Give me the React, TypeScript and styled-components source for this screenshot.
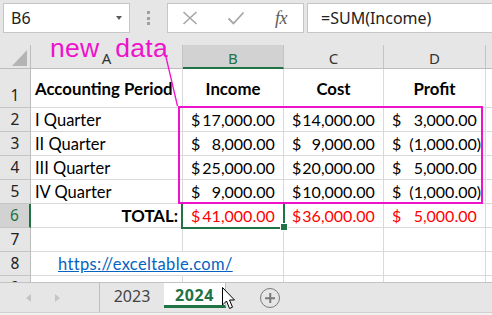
import React from "react";
import styled, { createGlobalStyle } from "styled-components";

const UI = `"Noto Sans", "Open Sans", sans-serif`;
const CELL = `Lato, "Noto Sans", sans-serif`;
const GREEN = "#217346";
const MAGENTA = "#ee12cc";

const GlobalStyle = createGlobalStyle`
  html, body { margin: 0; padding: 0; background: #ffffff; overflow: hidden; }
  * { box-sizing: border-box; }
`;

const Frame = styled.div`
  position: relative;
  width: 492px;
  height: 315px;
  background: #e6e6e6;
  display: flex;
  flex-direction: column;
  overflow: hidden;
`;

const FormulaBar = styled.div`
  flex: 0 0 45px;
  display: flex;
  align-items: flex-start;
  padding: 3px 0 0 3px;
`;

const NameBox = styled.div`
  flex: 0 0 127px;
  height: 30px;
  background: #fff;
  border: 1px solid #c6c6c6;
  display: flex;
  align-items: center;
  justify-content: space-between;
  padding: 0 7px 0 7px;
  font: 16px ${UI};
  color: #222;
`;

const Caret = styled.span`
  width: 0;
  height: 0;
  border-left: 3.5px solid transparent;
  border-right: 3.5px solid transparent;
  border-top: 4px solid #5a5a5a;
`;

const Grip = styled.div`
  margin: 8px 0 0 17px;
  display: flex;
  flex-direction: column;
  gap: 2.5px;
  & > span {
    width: 3px;
    height: 3px;
    background: #a0a0a0;
  }
`;

const ButtonsBox = styled.div`
  flex: 0 0 137px;
  height: 30px;
  margin-left: 17px;
  background: #fff;
  border: 1px solid #c6c6c6;
  position: relative;
  display: flex;
  align-items: center;
  padding-left: 14px;
`;

const Fx = styled.span`
  margin-left: auto;
  margin-right: 16px;
  font: italic 18px "Liberation Serif", "DejaVu Serif", serif;
  color: #5a5a5a;
  letter-spacing: -0.5px;
`;

const FormulaBox = styled.div`
  flex: 0 0 200px;
  height: 30px;
  margin-left: 3px;
  background: #fff;
  border: 1px solid #c6c6c6;
  border-right: none;
  display: flex;
  align-items: center;
  padding-left: 13px;
  font: 16px ${UI};
  color: #222;
`;

const SheetArea = styled.div`
  flex: 0 0 237px;
  background: #fff;
  overflow: hidden;
`;

const Grid = styled.div`
  display: grid;
  grid-template-columns: 31px 152px 101px 100px 102px 1fr;
  grid-template-rows: 24px 39px repeat(8, 24px);
`;

const Corner = styled.div`
  position: relative;
  background: #e6e6e6;
  border-right: 1px solid #bdbdbd;
  border-bottom: 1px solid #bdbdbd;
  &::after {
    content: "";
    position: absolute;
    right: 3px;
    bottom: 2px;
    width: 0;
    height: 0;
    border-left: 15px solid transparent;
    border-bottom: 16px solid #b4b4b4;
  }
`;

const ColHeader = styled.div<{ $selected?: boolean }>`
  background: ${(p) => (p.$selected ? "#d2d2d2" : "#e6e6e6")};
  border-right: 1px solid #c4c4c4;
  border-bottom: ${(p) => (p.$selected ? `2px solid ${GREEN}` : "1px solid #bdbdbd")};
  display: flex;
  align-items: center;
  justify-content: center;
  padding-top: 3px;
  font: 15px ${UI};
  color: ${(p) => (p.$selected ? GREEN : "#333")};
`;

const RowHeader = styled.div<{ $selected?: boolean }>`
  background: ${(p) => (p.$selected ? "#d2d2d2" : "#e6e6e6")};
  border-right: ${(p) => (p.$selected ? `2px solid ${GREEN}` : "1px solid #bdbdbd")};
  border-bottom: 1px solid #c4c4c4;
  display: flex;
  align-items: flex-end;
  justify-content: center;
  padding-bottom: 4px;
  font: 15.5px/16px ${UI};
  color: ${(p) => (p.$selected ? GREEN : "#222")};
`;

const Cell = styled.div<{
  $align?: "left" | "center" | "right";
  $bold?: boolean;
  $spill?: boolean;
}>`
  border-right: 1px solid ${(p) => (p.$spill ? "transparent" : "#d9d9d9")};
  border-bottom: 1px solid #d9d9d9;
  display: flex;
  align-items: center;
  justify-content: ${(p) =>
    p.$align === "center" ? "center" : p.$align === "right" ? "flex-end" : "flex-start"};
  padding: 0 4px;
  font: ${(p) => (p.$bold ? 700 : 400)} ${(p) => (p.$bold ? 16.8 : 16.5)}px ${CELL};
  color: #000;
  white-space: nowrap;
  min-width: 0;
`;

const MoneyCell = styled.div<{ $red?: boolean }>`
  border-right: 1px solid #d9d9d9;
  border-bottom: 1px solid #d9d9d9;
  display: flex;
  align-items: center;
  justify-content: space-between;
  padding: 0 4px 0 8px;
  font: 16px ${CELL};
  color: ${(p) => (p.$red ? "#ff0000" : "#000")};
  white-space: nowrap;
`;

const Paren = styled.span<{ $hidden?: boolean }>`
  visibility: ${(p) => (p.$hidden ? "hidden" : "visible")};
`;

const Link = styled.a`
  padding-left: 23px;
  color: #0563c1;
  text-decoration: underline;
  letter-spacing: 0.35px;
`;

const TabBar = styled.div`
  flex: 0 0 30px;
  display: flex;
  align-items: flex-start;
  border-top: 1px solid #c2c2c2;
  background: #e6e6e6;
`;

const NavArea = styled.div`
  flex: 0 0 100px;
  height: 29px;
  display: flex;
  align-items: center;
  padding-left: 26px;
  gap: 24px;
  border-right: 1px solid #bdbdbd;
`;

const NavArrow = styled.span<{ $dir: "left" | "right" }>`
  width: 0;
  height: 0;
  border-top: 4.5px solid transparent;
  border-bottom: 4.5px solid transparent;
  ${(p) =>
    p.$dir === "left"
      ? "border-right: 5px solid #c4c4c4;"
      : "border-left: 5px solid #c4c4c4;"}
`;

const Tab = styled.div<{ $active?: boolean }>`
  flex: 0 0 ${(p) => (p.$active ? 62 : 64)}px;
  height: 25px;
  display: flex;
  align-items: center;
  justify-content: center;
  font: ${(p) => (p.$active ? 700 : 400)} 16px ${UI};
  letter-spacing: ${(p) => (p.$active ? 0.6 : 0)}px;
  color: ${(p) => (p.$active ? GREEN : "#444")};
  background: ${(p) => (p.$active ? "#fff" : "transparent")};
  border-bottom: ${(p) => (p.$active ? `3px solid ${GREEN}` : "none")};
  border-right: ${(p) => (p.$active ? "1px solid #bdbdbd" : "none")};
  padding-top: ${(p) => (p.$active ? 2 : 0)}px;
`;

const AddSheet = styled.div`
  margin: 5px 0 0 34px;
  width: 20px;
  height: 20px;
  border: 1.5px solid #7a7a7a;
  border-radius: 50%;
  position: relative;
  &::before,
  &::after {
    content: "";
    position: absolute;
    background: #7a7a7a;
    left: 50%;
    top: 50%;
    transform: translate(-50%, -50%);
  }
  &::before {
    width: 10px;
    height: 1.5px;
  }
  &::after {
    width: 1.5px;
    height: 10px;
  }
`;

const BottomStrip = styled.div`
  flex: 0 0 3px;
  background: #f2f2f2;
  border-top: 1px solid #d0d0d0;
`;

/* overlays */
const Selection = styled.div`
  position: absolute;
  left: 181px;
  top: 202px;
  width: 104px;
  height: 27px;
  border: 2px solid ${GREEN};
  pointer-events: none;
`;

const FillHandle = styled.div`
  position: absolute;
  left: 281px;
  top: 224px;
  width: 6px;
  height: 6px;
  background: ${GREEN};
  outline: 1px solid #fff;
`;

const MarkBox = styled.div`
  position: absolute;
  left: 178px;
  top: 106px;
  width: 305px;
  height: 98px;
  border: 2px solid ${MAGENTA};
  pointer-events: none;
`;

const Annotation = styled.div`
  position: absolute;
  left: 50px;
  top: 35px;
  font: 26.5px/26px "Liberation Sans", Arial, sans-serif;
  color: ${MAGENTA};
  word-spacing: 8px;
  letter-spacing: 0.3px;
  white-space: nowrap;
  pointer-events: none;
`;

const Overlay = styled.svg`
  position: absolute;
  left: 0;
  top: 0;
  pointer-events: none;
`;

type Row = [string, number, number, number];
const rows: Row[] = [
  ["I Quarter", 17000, 14000, 3000],
  ["II Quarter", 8000, 9000, -1000],
  ["III Quarter", 25000, 20000, 5000],
  ["IV Quarter", 9000, 10000, -1000],
];

function fmt(n: number): string {
  const abs = Math.abs(n);
  const whole = Math.floor(abs)
    .toString()
    .replace(/\B(?=(\d{3})+(?!\d))/g, ",");
  return `${whole}.00`;
}

function Money({ value, red }: { value: number; red?: boolean }) {
  const neg = value < 0;
  return (
    <MoneyCell $red={red}>
      <span>$</span>
      <span>
        {neg ? "(" : ""}
        {fmt(value)}
        <Paren $hidden={!neg}>)</Paren>
      </span>
    </MoneyCell>
  );
}

export default function App() {
  return (
    <>
      <GlobalStyle />
      <Frame>
        <FormulaBar>
          <NameBox>
            <span>B6</span>
            <Caret />
          </NameBox>
          <Grip>
            <span />
            <span />
            <span />
          </Grip>
          <ButtonsBox>
            <svg width="16" height="14" viewBox="0 0 16 14">
              <path d="M1.5 1 L14.5 13 M14.5 1 L1.5 13" stroke="#a6a6a6" strokeWidth="1.6" fill="none" />
            </svg>
            <svg width="18" height="14" viewBox="0 0 18 14" style={{ marginLeft: 29 }}>
              <path d="M1.5 7.5 L6.5 12.5 L16.5 1.5" stroke="#a6a6a6" strokeWidth="1.8" fill="none" />
            </svg>
            <Fx>fx</Fx>
          </ButtonsBox>
          <FormulaBox>=SUM(Income)</FormulaBox>
        </FormulaBar>

        <SheetArea>
          <Grid>
            <Corner />
            <ColHeader>A</ColHeader>
            <ColHeader $selected>B</ColHeader>
            <ColHeader>C</ColHeader>
            <ColHeader>D</ColHeader>
            <ColHeader />

            <RowHeader>1</RowHeader>
            <Cell $bold>Accounting Period</Cell>
            <Cell $bold $align="center">Income</Cell>
            <Cell $bold $align="center">Cost</Cell>
            <Cell $bold $align="center">Profit</Cell>
            <Cell />

            {rows.map((r, i) => (
              <React.Fragment key={r[0]}>
                <RowHeader>{i + 2}</RowHeader>
                <Cell>{r[0]}</Cell>
                <Money value={r[1]} />
                <Money value={r[2]} />
                <Money value={r[3]} />
                <Cell />
              </React.Fragment>
            ))}

            <RowHeader $selected>6</RowHeader>
            <Cell $bold $align="right">TOTAL:</Cell>
            <Money value={41000} red />
            <Money value={36000} red />
            <Money value={5000} red />
            <Cell />

            <RowHeader>7</RowHeader>
            <Cell />
            <Cell />
            <Cell />
            <Cell />
            <Cell />

            <RowHeader>8</RowHeader>
            <Cell $spill>
              <Link href="#">https://exceltable.com/</Link>
            </Cell>
            <Cell />
            <Cell />
            <Cell />
            <Cell />

            <RowHeader>9</RowHeader>
            <Cell />
            <Cell />
            <Cell />
            <Cell />
            <Cell />
          </Grid>
        </SheetArea>

        <TabBar>
          <NavArea>
            <NavArrow $dir="left" />
            <NavArrow $dir="right" />
          </NavArea>
          <Tab>2023</Tab>
          <Tab $active>2024</Tab>
          <AddSheet />
        </TabBar>
        <BottomStrip />

        <Selection />
        <FillHandle />
        <MarkBox />
        <Annotation>new data</Annotation>
        <Overlay width="492" height="315" viewBox="0 0 492 315">
          <line x1="166" y1="57" x2="177.5" y2="106" stroke={MAGENTA} strokeWidth="1.3" />
          <path
            d="M222.5 287.5 L222.5 305 L226.5 301 L229.5 308.5 L232.5 307.2 L229.5 300 L234.5 300 Z"
            fill="#fff"
            stroke="#000"
            strokeWidth="1"
            strokeLinejoin="miter"
          />
        </Overlay>
      </Frame>
    </>
  );
}
